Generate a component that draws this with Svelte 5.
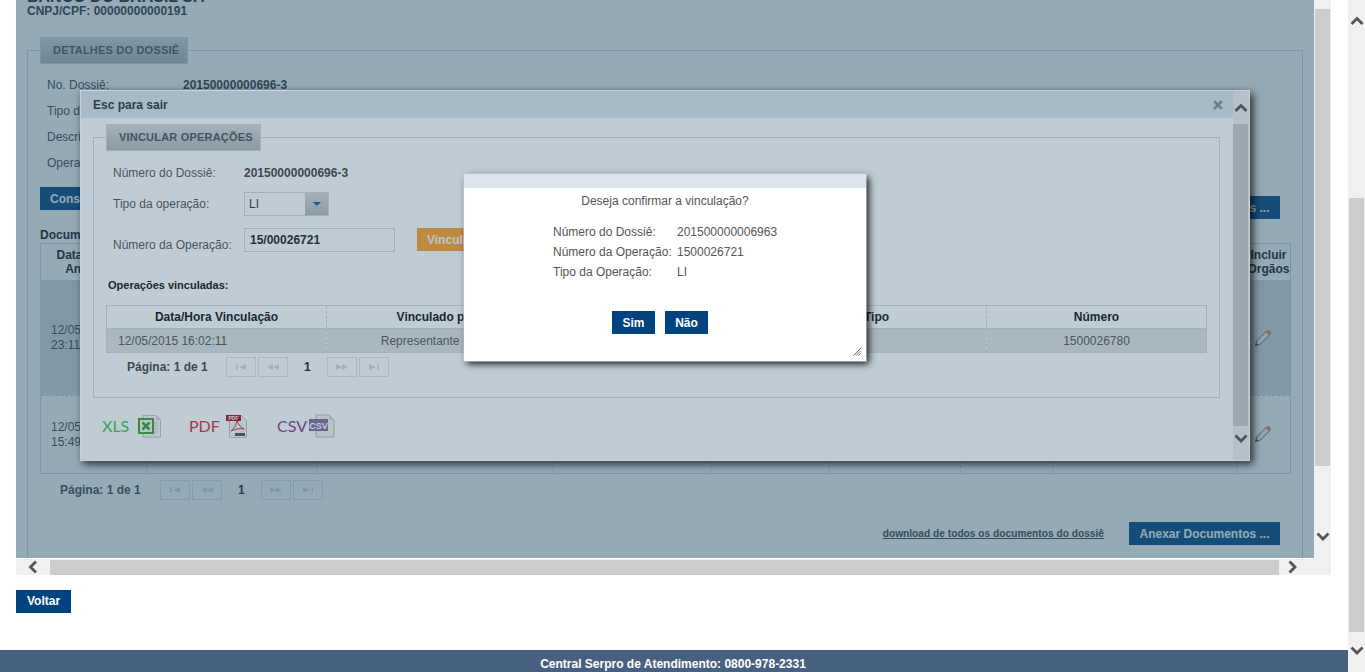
<script>
  const docCols = [106, 170, 237, 157, 119, 131, 92, 184, 54];
  const confirmRows = [
    ['Número do Dossiê:', '201500000006963'],
    ['Número da Operação:', '1500026721'],
    ['Tipo da Operação:', 'LI']
  ];
</script>

{#snippet chevron(dir)}
  <svg class="chev" width="14" height="14" viewBox="0 0 14 14" aria-hidden="true">
    {#if dir === 'up'}<path d="M1.5 10 7 4.5 12.5 10" />{/if}
    {#if dir === 'down'}<path d="M1.5 4.5 7 10 12.5 4.5" />{/if}
    {#if dir === 'left'}<path d="M10 1.5 4.5 7 10 12.5" />{/if}
    {#if dir === 'right'}<path d="M4.5 1.5 10 7 4.5 12.5" />{/if}
  </svg>
{/snippet}

{#snippet pgIcon(d)}
  <span class="pg-btn">
    <svg width="14" height="8" viewBox="0 0 14 8" aria-hidden="true"><path d={d} /></svg>
  </span>
{/snippet}

{#snippet pager(cls)}
  <div class="pager {cls}">
    <span class="pg-label">Página: 1 de 1</span>
    <span class="pg-group">
      {@render pgIcon('M2 1h1.5v6H2zM12 1v6L5 4z')}
      {@render pgIcon('M7 1v6L1 4zM13 1v6L7 4z')}
    </span>
    <b class="pg-num">1</b>
    <span class="pg-group">
      {@render pgIcon('M1 1l6 3-6 3zM7 1l6 3-6 3z')}
      {@render pgIcon('M2 1l7 3-7 3zM10.5 1H12v6h-1.5z')}
    </span>
  </div>
{/snippet}

{#snippet pencil()}
  <svg class="pencil" width="18" height="18" viewBox="0 0 18 18" aria-hidden="true">
    <path d="M1.5 16.5 3 11.5 12 2.5 15.5 6 6.500 15z" fill="#f2f2f2" stroke="#666" stroke-width="1" />
    <path d="M12 2.500 13.500 1.200q1-.6 2 .3l1.200 1.200q.8 1 .2 2L15.500 6z" fill="#ef8a3a" />
    <path d="M1.200 16.800 2 13.800 4.200 16z" fill="#444" />
  </svg>
{/snippet}

<div class="page">
  <div class="main">
    <div class="frame">
      <div class="viewport">
        <div class="content">
          <h1>BANCO DO BRASIL SA</h1>
          <div class="cnpj">CNPJ/CPF: 00000000000191</div>

          <fieldset class="outer">
            <legend>DETALHES DO DOSSIÊ</legend>
            <div class="details">
              <div class="d-row"><span>No. Dossiê:</span><b>20150000000696-3</b></div>
              <div class="d-row"><span>Tipo da operação:</span><b></b></div>
              <div class="d-row"><span>Descrição:</span><b></b></div>
              <div class="d-row"><span>Operações:</span><b></b></div>
            </div>
            <div class="actions">
              <button class="btn">Consultar</button>
              <button class="btn right">Anexar Documentos ...</button>
            </div>
            <div class="doc-title">Documentos</div>
            <table class="docs">
              <colgroup>
                {#each docCols as w}<col style="width:{w}px" />{/each}
              </colgroup>
              <thead>
                <tr>
                  <th>Data/Hora de<br />Anexação</th><th>Tipo</th><th>Descrição</th><th>Arquivo</th><th>Tamanho</th><th>Situação</th><th>Órgão</th><th>Anexado por</th><th class="last">Incluir<br />Orgãos</th>
                </tr>
              </thead>
              <tbody>
                <tr class="r1">
                  <td class="date">12/05/2015<br />23:11:40</td><td></td><td></td><td></td><td></td><td></td><td></td><td></td>
                  <td class="ic">{@render pencil()}</td>
                </tr>
                <tr class="r2">
                  <td class="date">12/05/2015<br />15:49:02</td><td></td><td></td><td></td><td></td><td></td><td></td>
                  <td class="by">Representante<br />Legal<br />12/05/2015<br />16:15</td>
                  <td class="ic">{@render pencil()}</td>
                </tr>
              </tbody>
            </table>
            {@render pager('pager-doc')}
            <div class="bottom-actions">
              <a href="#top" class="dl">download de todos os documentos do dossiê</a>
              <button class="btn wide">Anexar Documentos ...</button>
            </div>
          </fieldset>
        </div>

        <div class="overlay"></div>

        <div class="modal">
          <div class="modal-main">
            <div class="modal-head">
              <span>Esc para sair</span>
              <svg width="10" height="10" viewBox="0 0 10 10" aria-hidden="true"><path d="M1.200 1.200 8.800 8.800M8.800 1.200 1.200 8.800" stroke="#8a8f92" stroke-width="2.600" /></svg>
            </div>
            <div class="modal-body">
              <fieldset class="inner">
                <legend>VINCULAR OPERAÇÕES</legend>
                <div class="f-row r-a"><span class="lbl">Número do Dossiê:</span><b>20150000000696-3</b></div>
                <div class="f-row r-b">
                  <span class="lbl">Tipo da operação:</span>
                  <span class="select"><span class="sel-val">LI</span><span class="sel-arrow"><i></i></span></span>
                </div>
                <div class="f-row r-c">
                  <span class="lbl low">Número da Operação:</span>
                  <span class="input">15/00026721</span>
                  <button class="btn-orange">Vincular</button>
                </div>
                <div class="linked">Operações vinculadas:</div>
                <table class="ops">
                  <colgroup>
                    <col style="width:220px" /><col style="width:220px" /><col style="width:220px" /><col style="width:220px" /><col style="width:220px" />
                  </colgroup>
                  <thead>
                    <tr><th>Data/Hora Vinculação</th><th>Vinculado por</th><th>Data</th><th>Tipo</th><th>Número</th></tr>
                  </thead>
                  <tbody>
                    <tr><td class="l">12/05/2015 16:02:11</td><td>Representante Legal</td><td></td><td></td><td>1500026780</td></tr>
                  </tbody>
                </table>
                {@render pager('pager-ops')}
              </fieldset>
              <div class="exports">
                <span class="exp xls">XLS</span>
                <svg class="ico-x" width="24" height="24" viewBox="0 0 24 24" aria-hidden="true">
                  <path d="M5 1.500h13l4.500 4.500v17H5z" fill="#f7f7f7" stroke="#c4c4c4" />
                  <path d="M18 1.500V6h4.500z" fill="#d8d8d8" />
                  <path d="M15 9h5M15 12h5M15 15h5M15 18h5" stroke="#cfcfcf" />
                  <rect x="1" y="5" width="14" height="14" fill="#eef7e8" stroke="#4a9c2d" stroke-width="2" />
                  <path d="M4.500 8.500 11.500 15.500M11.500 8.500 4.500 15.500" stroke="#3c9a3a" stroke-width="2.500" />
                </svg>
                <span class="exp pdf">PDF</span>
                <svg class="ico-p" width="22" height="24" viewBox="0 0 22 24" aria-hidden="true">
                  <path d="M3.500 1.500h12l5 5v17h-17z" fill="#f7f7f7" stroke="#c4c4c4" />
                  <rect x="0" y="1" width="15" height="6" fill="#b01018" />
                  <text x="7.500" y="6" class="mini">PDF</text>
                  <path d="M11 7c-1 4-3 8-6 10 4-2 9-3 13-2-3-1-5-4-7-8z" fill="none" stroke="#c81e26" stroke-width=".9" />
                  <rect x="9" y="19" width="10" height="3" fill="#555" />
                </svg>
                <span class="exp csv">CSV</span>
                <svg class="ico-c" width="26" height="24" viewBox="0 0 26 24" aria-hidden="true">
                  <path d="M7 1h13l5 5v17H7z" fill="#f4f4f4" stroke="#b8b8b8" />
                  <path d="M20 1v5h5z" fill="#d4d4d4" />
                  <rect x="0" y="5" width="19" height="12" fill="#8a6a9c" />
                  <text x="9.500" y="14.500" class="mini-c">CSV</text>
                </svg>
              </div>
            </div>
          </div>
          <div class="m-scroll">
            <span class="m-up">{@render chevron('up')}</span>
            <span class="m-thumb"></span>
            <span class="m-down">{@render chevron('down')}</span>
          </div>
          <div class="modal-overlay"></div>
        </div>

        <div class="confirm">
          <div class="confirm-head"></div>
          <p>Deseja confirmar a vinculação?</p>
          <table class="c-table">
            <tbody>
              {#each confirmRows as [k, v]}
                <tr><td>{k}</td><td>{v}</td></tr>
              {/each}
            </tbody>
          </table>
          <div class="c-btns">
            <button class="btn-solid">Sim</button>
            <button class="btn-solid">Não</button>
          </div>
          <svg class="grip" width="9" height="9" viewBox="0 0 9 9" aria-hidden="true"><path d="M8.500 1.500 1.500 8.500M8.500 4 4 8.500M8.500 6.500 6.500 8.500" stroke="#666" /></svg>
        </div>
      </div>

      <div class="v-scroll">
        <span class="v-up">{@render chevron('up')}</span>
        <span class="v-thumb"></span>
        <span class="v-down">{@render chevron('down')}</span>
      </div>
      <div class="h-scroll">
        <span class="h-arrow">{@render chevron('left')}</span>
        <span class="h-thumb"></span>
        <span class="h-arrow">{@render chevron('right')}</span>
      </div>
      <div class="corner"></div>
    </div>

    <button class="btn-solid voltar">Voltar</button>

    <footer>Central Serpro de Atendimento: 0800-978-2331</footer>
  </div>

  <div class="page-scroll">
    <span class="p-up">{@render chevron('up')}</span>
    <span class="p-thumb"></span>
    <span class="p-down">{@render chevron('down')}</span>
  </div>
</div>

<style>
  :global(body) { margin: 0; overflow: hidden; background: #fff; }
  .page {
    width: 1365px; height: 672px; display: flex; overflow: hidden;
    font: 12px/14px "Liberation Sans", Arial, sans-serif; color: #555;
  }
  .main { width: 1348px; display: flex; flex-direction: column; }

  .frame {
    margin-left: 16px; width: 1315px; height: 575px; display: grid; background: #f0f0f0;
    grid-template-columns: 1298px 17px; grid-template-rows: 558px 17px;
  }
  .viewport { position: relative; overflow: hidden; background: #fff; }
  .content { margin-top: -12px; padding-left: 11px; }
  h1 { margin: 0; font-size: 16px; line-height: 18px; font-weight: bold; color: #222; }
  .cnpj { font-weight: bold; line-height: 14px; height: 14px; margin-top: -2px; color: #333; }

  fieldset { margin: 0; padding: 0; min-width: 0; }
  legend {
    box-sizing: border-box; padding: 0 12px; font-weight: bold; font-size: 11px; letter-spacing: .2px; white-space: nowrap;
    background: linear-gradient(#d8d9db, #b4b8ba); border: 1px solid #d6d7da; color: #4a545a;
  }
  .outer {
    margin-top: 19px; width: 1276px; height: 600px; box-sizing: border-box;
    border: 1px solid #d0d6da;
  }
  .outer legend { margin-left: 12px; height: 27px; line-height: 25px; width: 148px; }

  .details { padding: 8px 0 0 19px; }
  .d-row { display: flex; height: 26px; align-items: center; color: #444; }
  .d-row span { width: 136px; }
  .d-row b { color: #333; }

  .actions { display: flex; justify-content: space-between; margin: 11px 22px 0 12px; }
  .btn {
    height: 23px; padding: 0 10px; border: 0; background: #00437f; color: #fff; font: bold 12px "Liberation Sans", Arial, sans-serif;
  }
  .btn.right { margin-top: 9px; width: 151px; }
  .btn.wide { width: 151px; }
  .doc-title { margin: 9px 0 0 12px; font-weight: bold; color: #111; height: 14px; line-height: 14px; }

  table { border-collapse: collapse; table-layout: fixed; }
  .docs { margin: 1px 0 0 12px; width: 1250px; border: 1px solid #d0d6da; color: #444; }
  .docs th { height: 36px; padding: 0; border-bottom: 1px solid #d0d6da; border-right: 1px dashed #d0d6da; color: #111; font-size: 12px; overflow: hidden; white-space: nowrap; }
  .docs th.last { padding-left: 10px; }
  .docs td { padding: 0 0 0 10px; border-right: 1px dashed #d0d6da; vertical-align: middle; line-height: 15px; overflow: hidden; white-space: nowrap; }
  .r1 { height: 115px; background: #dbdfe1; }
  .r1 td { border-bottom: 1px dashed #c6ccd0; }
  .r2 { height: 78px; }
  .docs td.by { padding-left: 36px; text-align: center; }
  .docs td.ic { padding: 0 0 0 17px; }
  .pencil { display: block; margin-top: -1px; }

  .pager { display: flex; align-items: center; height: 20px; font-weight: bold; color: #444; }
  .pg-group { display: flex; gap: 2px; }
  .pg-btn {
    box-sizing: border-box; width: 30px; height: 20px; border: 1px solid #dfe4e8;
    display: flex; align-items: center; justify-content: center;
  }
  .pg-btn path { fill: #d2d8dc; }
  .pg-label { width: 100px; }
  .pg-num { width: 23px; margin-left: 16px; color: #222; text-align: left; }
  .pager-doc { margin: 6px 0 0 32px; }
  .pager-ops { margin: 4px 0 0 33px; }
  .pager-ops .pg-label { width: 99px; }

  .bottom-actions { display: flex; justify-content: flex-end; align-items: center; gap: 25px; margin: 22px 22px 0 0; }
  .dl { font-size: 10.2px; font-weight: bold; color: #444; text-decoration: underline; }

  .overlay { position: absolute; inset: 0; background: rgba(43, 87, 112, .506); }

  .modal {
    position: absolute; left: 64px; top: 90px; width: 1170px; height: 371px; box-sizing: border-box;
    display: flex; background: #fff; border: 1px solid #d0d0d0;
    box-shadow: 3px 3px 8px rgba(0, 0, 0, .75);
  }
  .modal-main { width: 1152px; display: flex; flex-direction: column; }
  .modal-head {
    height: 27px; flex: none; background: #dce5ed; display: flex; align-items: center; justify-content: space-between;
    padding: 0 10px 0 12px; font-weight: bold; color: #333; font-size: 12px;
  }
  .modal-body { flex: 1; padding: 6px 0 0 12px; }
  .inner { width: 1127px; box-sizing: border-box; height: 274px; border: 1px solid #d6d7da; padding: 0; }
  .inner legend { margin-left: 12px; height: 27px; line-height: 25px; width: 155px; }
  .f-row { display: flex; align-items: center; padding-left: 19px; color: #555; }
  .f-row .lbl { width: 131px; }
  .f-row b { color: #444; }
  .r-a { margin-top: 10px; height: 23px; }
  .r-b { margin-top: 8px; height: 24px; }
  .r-c { margin-top: 12px; height: 24px; }
  .lbl.low { padding-top: 9px; }
  .select {
    box-sizing: border-box; display: flex; width: 85px; height: 24px; border: 1px solid #d6d7da; background: #fff;
  }
  .sel-val { flex: 1; padding-left: 4px; line-height: 22px; color: #333; }
  .sel-arrow {
    width: 23px; display: flex; align-items: center; justify-content: center;
    background: linear-gradient(#d8d9db, #b4b8ba);
  }
  .sel-arrow i { width: 0; height: 0; border: 4px solid transparent; border-top: 4px solid #1f5f85; border-bottom: 0; }
  .input {
    box-sizing: border-box; width: 151px; height: 24px; border: 1px solid #d6d7da; padding-left: 5px; line-height: 22px;
    font-weight: bold; color: #222; background: #fff;
  }
  .btn-orange {
    margin: 0 0 1px 22px; height: 23px; border: 0; background: #ffa02e; color: #f4f4f4;
    font: bold 12px "Liberation Sans", Arial, sans-serif; padding: 0 10px;
  }
  .linked { margin: 26px 0 0 14px; font-weight: bold; font-size: 11px; color: #111; height: 14px; line-height: 14px; }
  .ops { margin: 13px 0 0 12px; width: 1100px; border: 1px solid #d6d7da; color: #555; }
  .ops th { height: 22px; padding: 0; border-right: 1px dashed #d6d7da; border-bottom: 1px solid #d6d7da; color: #111; font-size: 12px; white-space: nowrap; overflow: hidden; }
  .ops td { height: 23px; padding: 0; text-align: center; border-right: 1px dashed #d6d7da; background: #e0e1e1; white-space: nowrap; overflow: hidden; }
  .ops td.l { text-align: left; padding-left: 11px; }

  .exports { display: flex; align-items: center; margin: 16px 0 0 9px; height: 24px; }
  .exp { font: 400 16px/24px Lato, "Liberation Sans", sans-serif; }
  .xls { color: #40c549; width: 36px; }
  .pdf { color: #d62f31; width: 37px; margin-left: 27px; }
  .csv { color: #933592; width: 32px; margin-left: 29px; }
  .mini { font: bold 5px "Liberation Sans", sans-serif; fill: #fff; text-anchor: middle; }
  .mini-c { font: bold 9px "Liberation Sans", sans-serif; fill: #fff; text-anchor: middle; }

  .m-scroll { width: 16px; display: flex; flex-direction: column; background: #f0f0f0; }
  .m-up, .m-down, .v-up, .v-down, .p-up, .p-down, .h-arrow { display: flex; align-items: center; justify-content: center; flex: none; }
  .m-up { height: 33px; }
  .m-thumb { height: 302px; width: 15px; background: #ccc; }
  .m-down { height: 22px; padding-top: 1px; }
  .chev { display: block; }
  .chev path { fill: none; stroke: #555; stroke-width: 2.800; }
  .modal-overlay { position: absolute; inset: 0; background: rgba(43, 87, 112, .3); pointer-events: none; }

  .confirm {
    position: absolute; left: 448px; top: 174px; width: 402px; height: 187px; box-sizing: border-box;
    background: #fff; box-shadow: 3px 3px 7px rgba(0, 0, 0, .85); outline: 1px solid rgba(200,205,210,.6);
  }
  .confirm-head { height: 14px; background: #dce5ed; }
  .confirm p { margin: 6px 0 0; text-align: center; line-height: 14px; color: #555; }
  .c-table { margin: 14px 0 0 89px; color: #555; }
  .c-table td { padding: 0; height: 20px; white-space: nowrap; }
  .c-table td:first-child { width: 124px; }
  .c-btns { display: flex; justify-content: center; gap: 10px; margin-top: 29px; padding-right: 10px; }
  .btn-solid {
    height: 23px; width: 43px; padding: 0; border: 0; background: #00437f; color: #fff;
    font: bold 12px "Liberation Sans", Arial, sans-serif;
  }
  .grip { position: absolute; right: 5px; bottom: 5px; }

  .v-scroll { display: flex; flex-direction: column; overflow: hidden; align-items: center; }
  .v-up { margin-top: -17px; height: 26px; }
  .v-thumb { width: 15px; height: 457px; background: #ccc; flex: none; }
  .v-down { height: 22px; margin-top: 59px; }
  .h-scroll { display: flex; align-items: center; border-top: 1px solid #fff; box-sizing: border-box; }
  .h-arrow { width: 34px; height: 15px; }
  .h-arrow:last-child { width: 26px; padding-right: 0; }
  .h-thumb { width: 1229px; height: 15px; background: #ccc; }
  .corner { background: #f0f0f0; }

  .voltar { margin: 15px 0 0 16px; width: 55px; flex: none; padding-bottom: 2px; }
  footer {
    margin-top: auto; height: 22px; flex: none; background: #486080; color: #fff; font-weight: bold;
    text-align: center; line-height: 28px; overflow: hidden; padding-right: 2px; box-sizing: border-box;
  }

  .page-scroll { width: 17px; display: flex; flex-direction: column; align-items: center; background: #f0f0f0; }
  .p-up { height: 41px; margin-bottom: 157px; }
  .p-thumb { width: 15px; height: 434px; background: #ccc; flex: none; }
  .p-down { height: 36px; }
</style>
